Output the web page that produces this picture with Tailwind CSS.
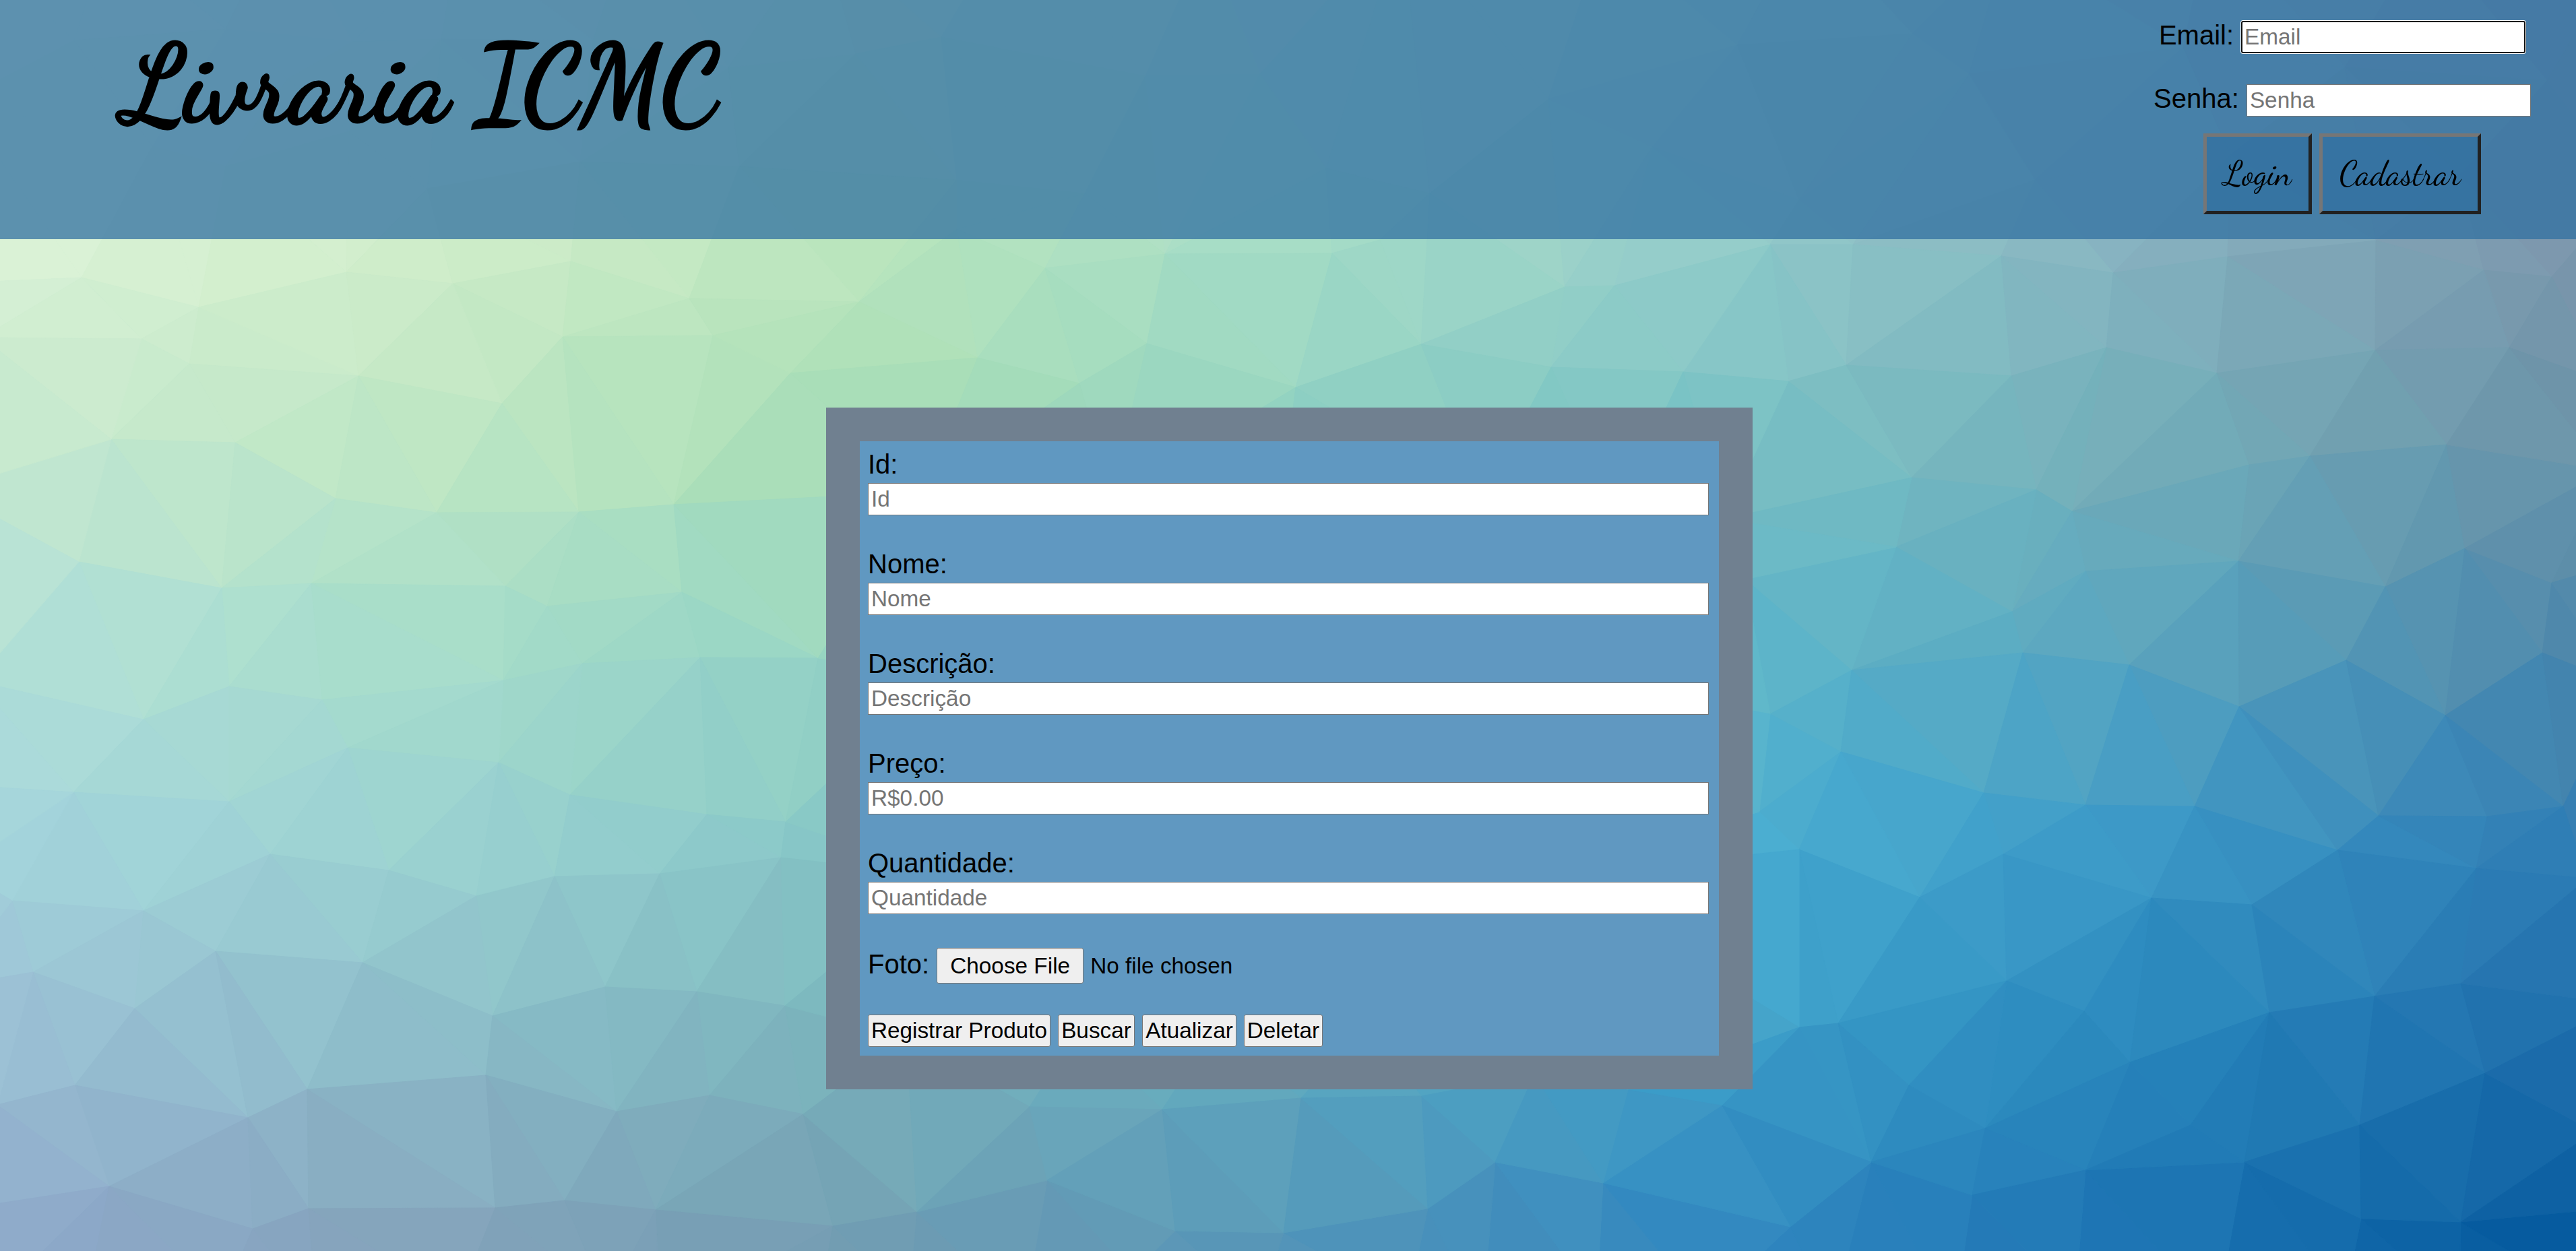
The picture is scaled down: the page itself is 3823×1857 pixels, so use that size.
<!DOCTYPE html>
<html lang="pt-BR">
<head>
<meta charset="utf-8">
<title>Livraria ICMC</title>
<script src="https://cdn.jsdelivr.net/npm/@tailwindcss/browser@4"></script>
</head>
<body class="relative h-[1857px] w-[3823px] overflow-hidden bg-[#80c8c8] font-['Liberation_Sans',Arial,sans-serif] text-[33.33px] text-black">
<svg id="mesh" class="absolute inset-0 h-[1857px] w-[3823px]" viewBox="0 0 3823 1857" aria-hidden="true"></svg>

<div class="relative flex h-full flex-col">
  <header class="flex h-[355px] justify-between bg-[rgb(50,112,160)]/75">
    <h1 class="ml-[185px] mt-[6px] h-[240px] whitespace-nowrap font-['Dancing_Script','Liberation_Serif',cursive] text-[160px] font-normal leading-[240px] [-webkit-text-stroke:5px_black]">Livraria ICMC</h1>
    <div class="flex w-[694px] flex-col items-center pt-[31px]">
      <div class="flex h-12 items-baseline gap-[11px]">
        <label for="email" class="text-[40px] leading-[42px]">Email:</label>
        <input id="email" placeholder="Email" class="h-12 w-[422px] rounded-[3px] border-2 border-[#101010] bg-white px-[3px] leading-[44px] ring-1 ring-white outline-none placeholder:text-[#757575]">
      </div>
      <div class="mt-[46px] flex h-12 items-baseline gap-[11px]">
        <label for="senha" class="text-[40px] leading-[42px]">Senha:</label>
        <input id="senha" placeholder="Senha" class="h-12 w-[422px] border border-[#767676] bg-white px-[4px] leading-[46px] placeholder:text-[#757575]">
      </div>
      <div class="mt-[25px] flex gap-[11px] font-['Dancing_Script','Liberation_Serif',cursive] text-[50px]">
        <button class="flex h-[120px] w-[161px] items-center justify-center border-5 border-t-[#767676] border-l-[#767676] border-r-[#212121] border-b-[#212121] bg-[rgb(50,112,160)]/75">Login</button>
        <button class="flex h-[120px] w-[240px] items-center justify-center border-5 border-t-[#767676] border-l-[#767676] border-r-[#212121] border-b-[#212121] bg-[rgb(50,112,160)]/75">Cadastrar</button>
      </div>
    </div>
  </header>

  <main class="ml-[1226px] mt-[250px] h-[1012px] w-[1375px] border-[50px] border-[#708090] bg-[#6098c1] pl-[12px] pr-[15px] pt-[11px]">
    <div class="mb-[49px] flex flex-col gap-[5px]">
      <label for="id" class="text-[40px] leading-[46px]">Id:</label>
      <input id="id" placeholder="Id" class="h-12 border border-[#767676] bg-white px-[4px] placeholder:text-[#757575]">
    </div>
    <div class="mb-[49px] flex flex-col gap-[5px]">
      <label for="nome" class="text-[40px] leading-[46px]">Nome:</label>
      <input id="nome" placeholder="Nome" class="h-12 border border-[#767676] bg-white px-[4px] placeholder:text-[#757575]">
    </div>
    <div class="mb-[49px] flex flex-col gap-[5px]">
      <label for="descricao" class="text-[40px] leading-[46px]">Descrição:</label>
      <input id="descricao" placeholder="Descrição" class="h-12 border border-[#767676] bg-white px-[4px] placeholder:text-[#757575]">
    </div>
    <div class="mb-[49px] flex flex-col gap-[5px]">
      <label for="preco" class="text-[40px] leading-[46px]">Preço:</label>
      <input id="preco" placeholder="R$0.00" class="h-12 border border-[#767676] bg-white px-[4px] placeholder:text-[#757575]">
    </div>
    <div class="mb-[49px] flex flex-col gap-[5px]">
      <label for="quantidade" class="text-[40px] leading-[46px]">Quantidade:</label>
      <input id="quantidade" placeholder="Quantidade" class="h-12 border border-[#767676] bg-white px-[4px] placeholder:text-[#757575]">
    </div>
    <div class="mt-[50px] flex h-[53px] items-baseline">
      <span class="mr-[11px] text-[40px] leading-[42px]">Foto:</span>
      <button class="h-[53px] w-[218px] whitespace-nowrap rounded-[3px] border border-[#767676] bg-[#efefef] leading-[51px]">Choose File</button>
      <span class="ml-[10px] leading-[40px]">No file chosen</span>
    </div>
    <div class="mt-[46px] flex gap-[11px] leading-[46px]">
      <button class="h-12 w-[271px] whitespace-nowrap rounded-[3px] border border-[#767676] bg-[#efefef]">Registrar Produto</button>
      <button class="h-12 w-[114px] whitespace-nowrap rounded-[3px] border border-[#767676] bg-[#efefef]">Buscar</button>
      <button class="h-12 w-[140px] whitespace-nowrap rounded-[3px] border border-[#767676] bg-[#efefef]">Atualizar</button>
      <button class="h-12 w-[117px] whitespace-nowrap rounded-[3px] border border-[#767676] bg-[#efefef]">Deletar</button>
    </div>
  </main>
</div>

<script>
// Low-poly backdrop: triangulate the vertices, then fill each facet from a colour grid.
const flat = [
 -80,-120,160,-100,420,-130,680,-90,940,-120,1220,-100,1500,-120,1790,-90,2080,-120,2380,-100,2680,-120,2980,-90,3280,-120,3600,-100,3920,-120,
 -60,150,335,43,655,58,523,62,427,117,335,247,226,217,518,195,634,280,861,240,1097,247,1081,100,880,60,110,60,
 1397,55,1270,80,1420,267,1610,287,1700,113,1870,110,1968,250,2122,287,2298,147,2452,218,2578,67,2670,297,2838,50,2922,110,3020,267,3310,230,3480,100,3650,260,3780,120,3240,70,3900,280,1420,340,
 -60,420,121,412,295,456,210,503,281,540,514,404,672,421,847,388,1023,443,835,500,1058,498,532,558,745,599,1173,554,165,652,349,657,498,740,648,761,859,760,1000,749,117,834,329,873,462,866,750,870,812,900,1012,879,340,1019,213,1068,478,1039,747,1010,864,985,1039,976,1214,977,-26,501,-80,727,-36,1011,-160,967,
 109,1176,340,1190,516,1110,740,1132,846,1180,1049,1209,1166,1220,18,1337,213,1352,401,1268,577,1292,707,1330,823,1301,979,1297,1159,1273,49,1443,320,1412,538,1429,200,1497,731,1508,898,1465,1034,1472,1165,1493,111,1611,368,1659,456,1617,721,1596,915,1650,1053,1626,1192,1654,162,1761,375,1824,458,1794,735,1793,838,1782,973,1796,1236,1820,-60,1165,-60,1290,-80,1465,-4,1640,-90,1800,
 20,1900,120,1970,330,1930,470,1950,680,1930,900,1930,980,1960,1210,1970,1350,1930,1520,1950,1680,1890,1870,1940,2090,1930,2200,1960,2370,1930,2530,1940,2720,1950,2900,1960,3080,1930,3290,1950,3480,1930,3650,1940,3880,1950,
 2627,363,2750,363,2970,380,3136,405,3306,381,3526,357,3686,401,3787,411,2654,566,2740,542,2985,558,3126,516,3290,554,3525,520,3724,516,2837,709,3022,727,3075,759,3338,690,3428,677,3631,660,2814,812,3095,848,3322,833,3540,871,3658,814,3787,865,2986,908,2748,995,3002,969,3160,987,3482,980,3773,969,2627,1060,3323,1049,3629,1062,3867,567,3868,698,3890,835,3890,1015,2560,770,2590,860,
 2732,1116,2944,1177,3095,1195,3257,1197,3469,1262,3530,1211,3691,1212,3804,1197,3675,1289,2611,1205,2670,1261,2849,1332,2973,1268,3193,1333,3342,1343,2978,1456,3093,1501,3368,1503,3524,1479,3652,1460,2670,1525,2728,1519,2833,1611,3161,1577,3688,1593,3251,1670,3502,1670,2946,1675,2777,1725,3095,1737,3331,1725,2927,1774,2657,1821,3504,1809,3652,1814,3840,1304,3890,1490,3850,1680,3890,1792,
 1275,448,1551,398,1729,377,1977,376,2048,356,2322,426,2396,424,1451,531,1702,510,1602,569,1923,575,2109,511,2302,545,2498,552,1370,730,1650,740,1900,760,2200,740,2400,760,1400,1000,1700,1000,2000,1000,2300,1000,1400,1300,1700,1300,2000,1300,2300,1300,1345,1540,1600,1530,1800,1530,2030,1520,
 1361,1799,1528,1643,1554,1752,1725,1647,1744,1827,1905,1830,1931,1630,2110,1627,2119,1794,2219,1725,2379,1756,2555,1641,2416,1618,2277,1595
];
const pts = [];
for (let i = 0; i < flat.length; i += 2) pts.push([flat[i], flat[i + 1]]);
const n = pts.length;
pts.push([-40000, -30000], [44000, -30000], [2000, 60000]);

function circle(a, b, c) {
  const [ax, ay] = pts[a], [bx, by] = pts[b], [cx, cy] = pts[c];
  const d = 2 * (ax * (by - cy) + bx * (cy - ay) + cx * (ay - by));
  const A = ax * ax + ay * ay, B = bx * bx + by * by, C = cx * cx + cy * cy;
  const x = (A * (by - cy) + B * (cy - ay) + C * (ay - by)) / d;
  const y = (A * (cx - bx) + B * (ax - cx) + C * (bx - ax)) / d;
  return { v: [a, b, c], x, y, r: (ax - x) ** 2 + (ay - y) ** 2 };
}
let tris = [circle(n, n + 1, n + 2)];
for (let i = 0; i < n; i++) {
  const [px, py] = pts[i], edges = new Map(), keep = [];
  for (const t of tris) {
    if ((px - t.x) ** 2 + (py - t.y) ** 2 < t.r) {
      for (let k = 0; k < 3; k++) {
        const a = t.v[k], b = t.v[(k + 1) % 3], key = Math.min(a, b) + "_" + Math.max(a, b);
        edges.has(key) ? edges.delete(key) : edges.set(key, [a, b]);
      }
    } else keep.push(t);
  }
  for (const [a, b] of edges.values()) keep.push(circle(a, b, i));
  tris = keep;
}

const rows = [0, 350, 650, 950, 1250, 1550, 1857];
const grid = [
 "e0f3dc d6eed6 c6e9c4 b2dcca 9ccfca 8ab4c4 8096b0",
 "daf2d6 d0edca b9e5bc a6ddc6 93cbca 86b2c0 7c96ac",
 "c7e9cf bfe7c4 a9deb6 93d3c2 7cc3c5 74aeb9 6b93a8",
 "b3e1d8 a7ddca 96d4c3 80c8c8 60b8ca 5ba5be 4f88ab",
 "a4d4dc 9bd2d1 87c6c7 6bbcc8 4aaed2 3c99c7 2f7cb4",
 "9bbfd4 8cbcc9 7ab3bb 60aabf 3d9fc9 2886bc 1e6dab",
 "8ea9ca 84a3bb 729db2 5595b8 3187c0 1d74b3 055a9e"
].map(r => r.split(" ").map(h => [0, 2, 4].map(i => parseInt(h.substr(i, 2), 16))));
function colour(x, y) {
  x = Math.max(0, Math.min(3822.9, x)); y = Math.max(0, Math.min(1856.9, y));
  const u = x / 3823 * 6, i = Math.floor(u), f = u - i;
  let j = 0; while (rows[j + 1] <= y) j++;
  const g = (y - rows[j]) / (rows[j + 1] - rows[j]);
  return "rgb(" + [0, 1, 2].map(k => Math.round(
    (grid[j][i][k] * (1 - f) + grid[j][i + 1][k] * f) * (1 - g) +
    (grid[j + 1][i][k] * (1 - f) + grid[j + 1][i + 1][k] * f) * g)).join(",") + ")";
}
const svg = document.getElementById("mesh");
for (const t of tris) {
  if (t.v.some(i => i >= n)) continue;
  const p = t.v.map(i => pts[i]);
  const c = colour((p[0][0] + p[1][0] + p[2][0]) / 3, (p[0][1] + p[1][1] + p[2][1]) / 3);
  const e = document.createElementNS("http://www.w3.org/2000/svg", "polygon");
  e.setAttribute("points", p.map(q => q.join(",")).join(" "));
  e.setAttribute("fill", c);
  e.setAttribute("stroke", c);
  e.setAttribute("stroke-width", "1");
  svg.appendChild(e);
}
</script>
</body>
</html>
